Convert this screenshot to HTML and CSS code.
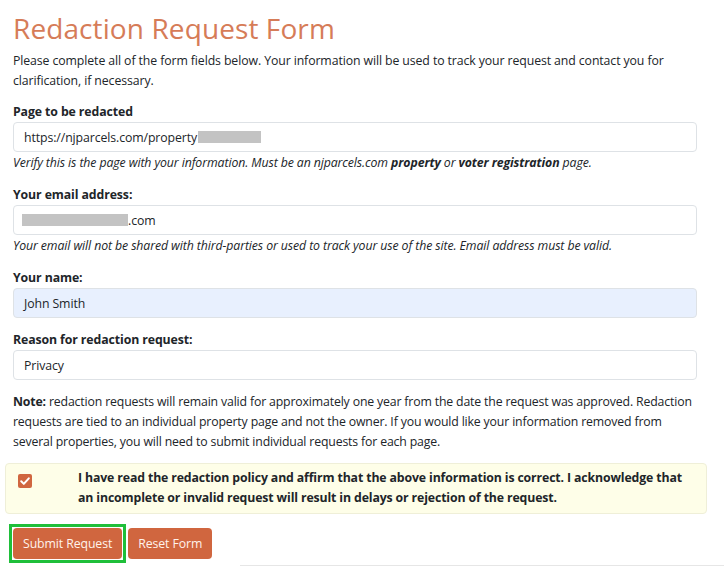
FILE: index.html
```html
<!DOCTYPE html>
<html>
<head>
<meta charset="utf-8">
<link rel="stylesheet" href="styles.css">
</head>
<body>
<div class="page">
  <h1 class="title">Redaction Request Form</h1>
  <p class="intro">Please complete all of the form fields below. Your information will be used to track your request and contact you for clarification, if necessary.</p>

  <div class="group">
    <div class="label">Page to be redacted</div>
    <div class="input"><span>https://njparcels.com/property</span><span class="blur blur-url"></span></div>
    <div class="help">Verify this is the page with your information. Must be an njparcels.com <b>property</b> or <b>voter registration</b> page.</div>
  </div>

  <div class="group">
    <div class="label">Your email address:</div>
    <div class="input"><span class="blur blur-mail"></span><span>.com</span></div>
    <div class="help">Your email will not be shared with third-parties or used to track your use of the site. Email address must be valid.</div>
  </div>

  <div class="group plain">
    <div class="label">Your name:</div>
    <div class="input autofill">John Smith</div>
  </div>

  <div class="group plain">
    <div class="label">Reason for redaction request:</div>
    <div class="input">Privacy</div>
  </div>

  <p class="note"><b>Note:</b> redaction requests will remain valid for approximately one year from the date the request was approved. Redaction requests are tied to an individual property page and not the owner. If you would like your information removed from several properties, you will need to submit individual requests for each page.</p>

  <div class="alert">
    <div class="check-col">
      <span class="checkbox"><svg viewBox="0 0 14 14" width="14" height="14"><path d="M3.2 7.3 L5.8 9.9 L10.8 4.3" fill="none" stroke="#fff" stroke-width="2" stroke-linecap="round" stroke-linejoin="round"/></svg></span>
    </div>
    <div class="alert-text">I have read the redaction policy and affirm that the above information is correct. I acknowledge that an incomplete or invalid request will result in delays or rejection of the request.</div>
  </div>

  <div class="actions">
    <span class="focus-ring"><button class="btn">Submit Request</button></span>
    <button class="btn">Reset Form</button>
  </div>
  <div class="footer-line"></div>
</div>
</body>
</html>
```

FILE: styles.css
```css
html, body {
  margin: 0;
  background: #ffffff;
}
body {
  font-family: "Open Sans", "Noto Sans", sans-serif;
  font-size: 12.3px;
  letter-spacing: -0.1px;
  color: #212529;
  overflow: hidden;
}
.page {
  padding: 0 27px 0 13px;
}
.title {
  margin: 0;
  padding-top: 11px;
  font-family: "Open Sans", sans-serif;
  font-weight: 400;
  font-size: 28px;
  letter-spacing: 0.1px;
  line-height: 34px;
  color: #d67c58;
}
.intro {
  margin: 6px 0 12px 0;
  line-height: 19.5px;
}
.group {
  margin-bottom: 12px;
}
.label {
  font-weight: 700;
  line-height: 20px;
}
.input {
  box-sizing: border-box;
  height: 30px;
  border: 1px solid #dee2e6;
  border-radius: 4px;
  padding: 0 10px;
  display: flex;
  align-items: center;
  color: #212529;
}
.input.autofill {
  background: #e8f0fe;
}
.blur {
  display: inline-block;
  background: #c3c3c3;
  height: 12px;
}
.blur-url { width: 63px; margin-left: 1px; }
.blur-mail { width: 106px; margin-left: -2px; }
.help {
  font-style: italic;
  line-height: 20px;
  margin-top: 1px;
}
.note {
  margin: 12px 0 11px 0;
  line-height: 20px;
  letter-spacing: -0.16px;
}
.alert {
  margin: 0 -10px 0 -8px;
  display: flex;
  background: #fefee8;
  border: 1px solid #efefd8;
  border-radius: 4px;
  padding: 4px 20px 5px 12px;
  font-weight: 700;
  letter-spacing: -0.13px;
  line-height: 20px;
}
.check-col {
  width: 60px;
  flex: none;
}
.checkbox {
  display: flex;
  align-items: center;
  justify-content: center;
  width: 14px;
  height: 14px;
  background: #d0663f;
  border-radius: 2px;
  margin-top: 6px;
}
.alert-text {
  flex: 1;
}
.actions {
  display: flex;
  gap: 6px;
  padding-top: 14px;
}
.focus-ring {
  display: flex;
  border: 3px solid #1fbf3a;
  padding: 1px;
  margin: -4px;
}
.btn {
  font-family: "Open Sans", sans-serif;
  font-size: 12.3px;
  letter-spacing: -0.1px;
  background: #d0663f;
  color: #fff3ec;
  border: 0;
  border-radius: 4px;
  height: 31px;
  padding: 0 10px;
}
.footer-line {
  margin: 6px -27px 0 227px;
  border-top: 1px solid #e6e6e6;
}
```
